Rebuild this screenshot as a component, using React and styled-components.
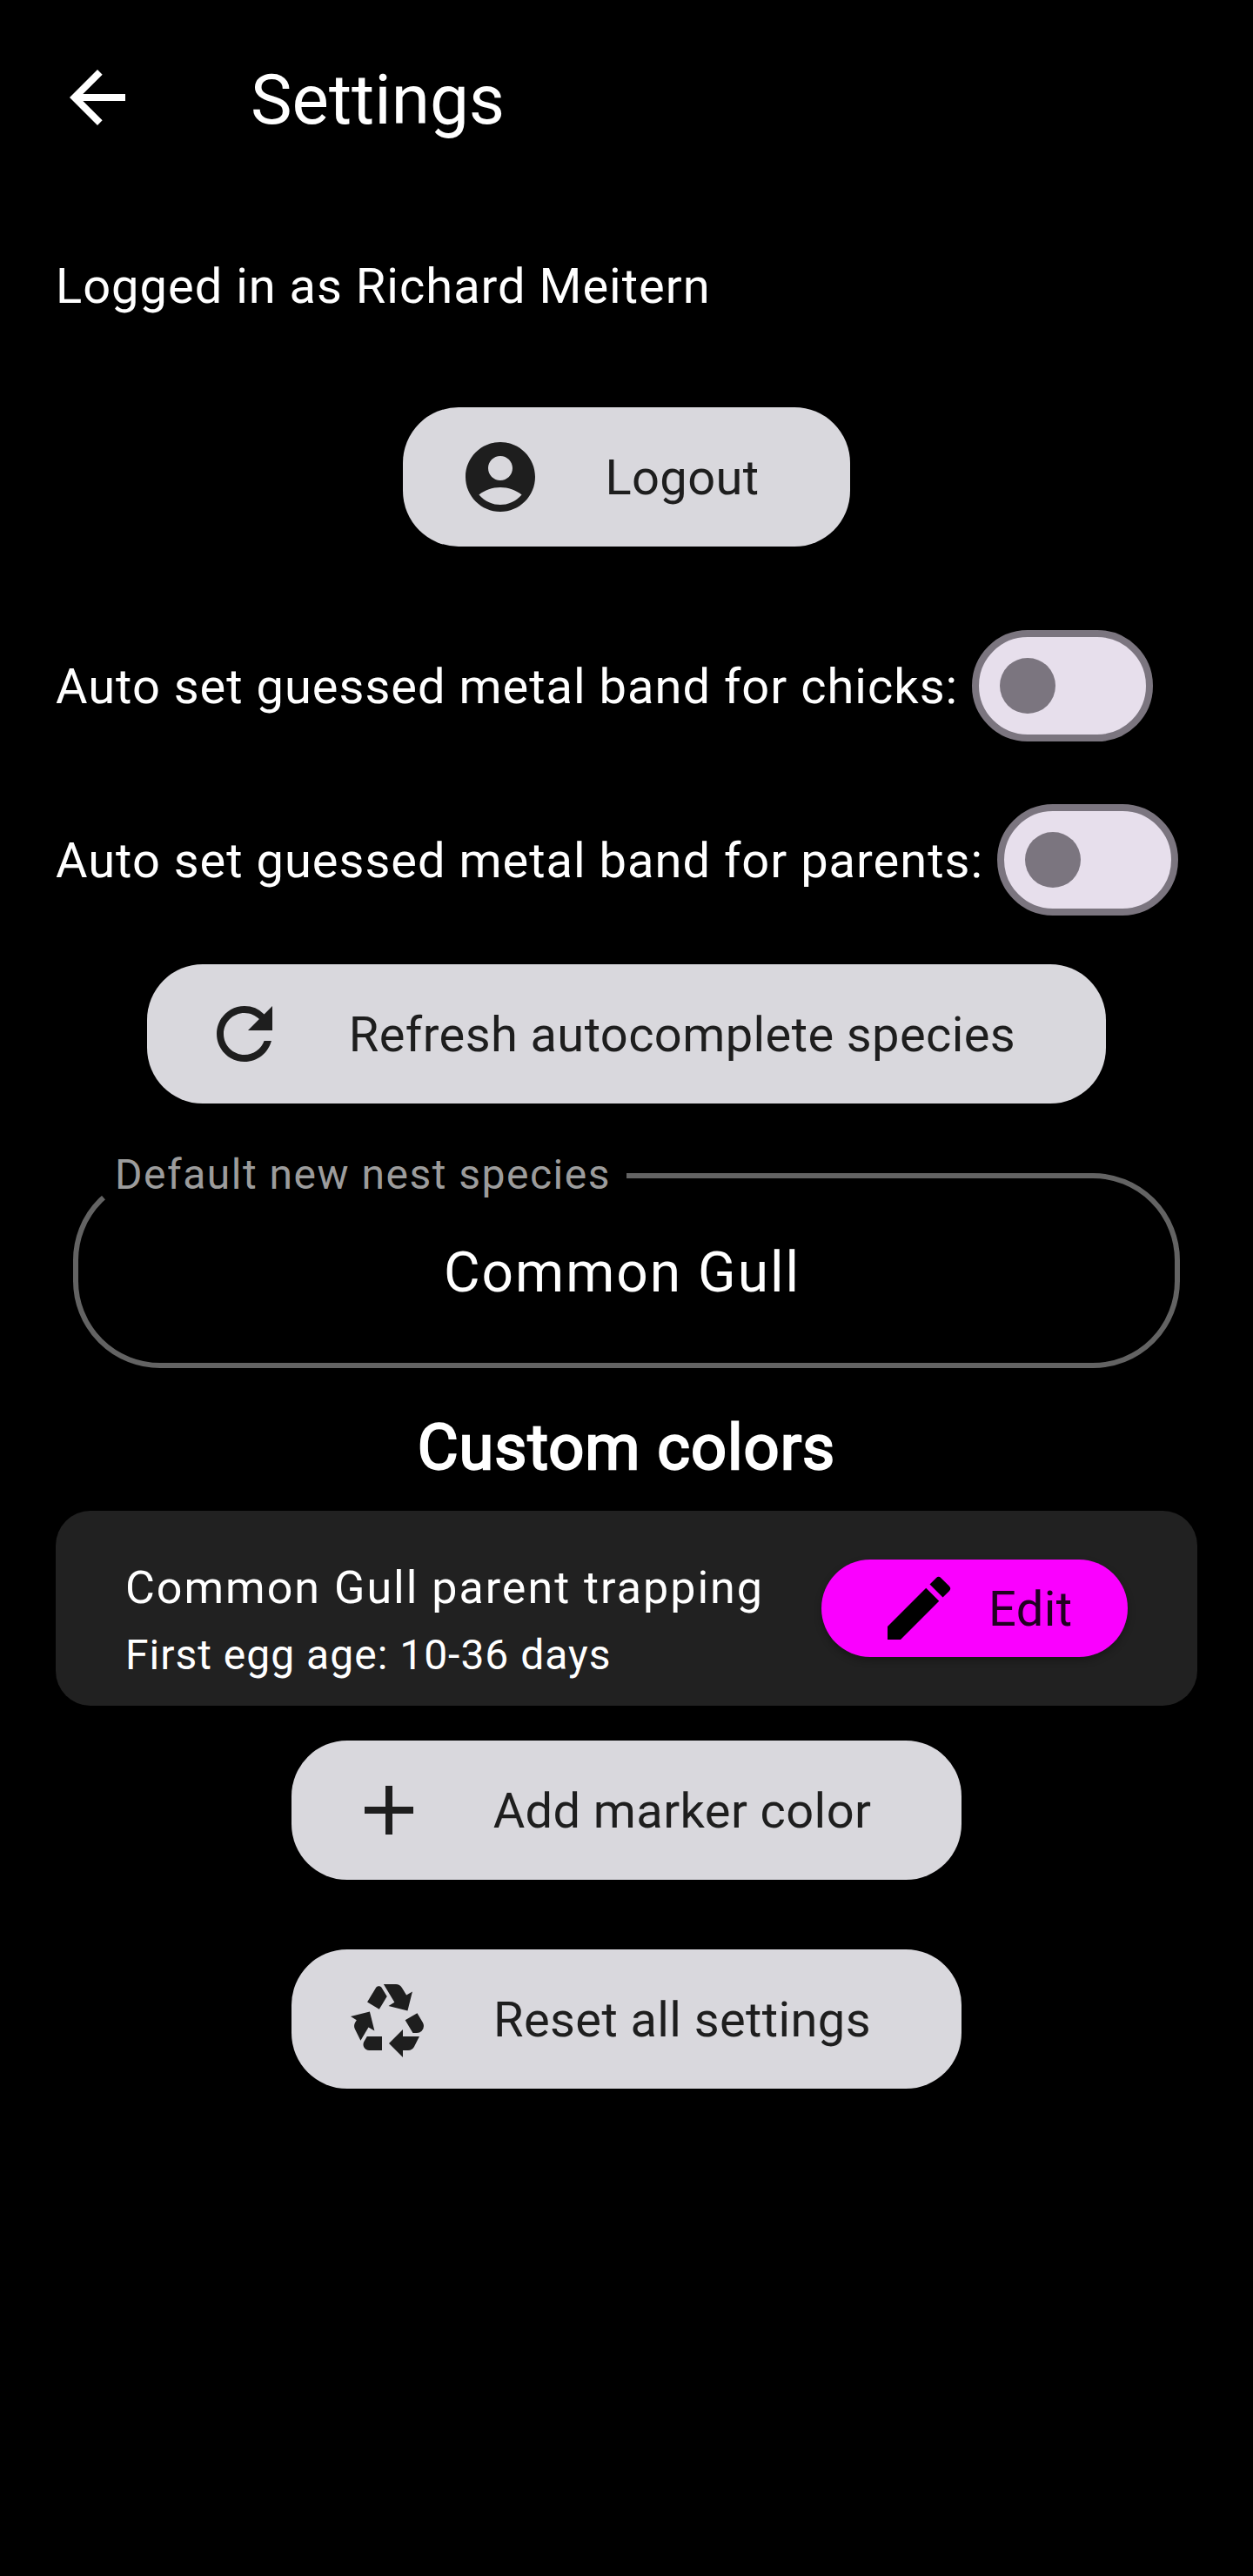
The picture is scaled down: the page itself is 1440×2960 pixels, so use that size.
import React from "react";
import styled, { createGlobalStyle } from "styled-components";
import { MdArrowBack, MdRefresh, MdAdd, MdRecycling, MdEdit } from "react-icons/md";

const GlobalStyle = createGlobalStyle`
  html, body { margin: 0; background: #000; }
  *, *::before, *::after { box-sizing: border-box; }
  button { border: 0; font: inherit; color: inherit; margin: 0; }
`;

const Screen = styled.main`
  width: 1440px;
  min-height: 2960px;
  background: #000;
  color: #fff;
  font-family: Roboto, "Liberation Sans", sans-serif;
  font-size: 56px;
  line-height: 80px;
  white-space: nowrap;
`;

const AppBar = styled.header`
  height: 224px;
  padding: 0 64px;
  display: flex;
  align-items: center;
`;

const BackButton = styled.button`
  display: flex;
  padding: 0;
  background: none;
`;

const Title = styled.h1`
  margin: 6px 0 0 128px;
  font-size: 80px;
  font-weight: 400;
  line-height: 96px;
`;

const Content = styled.div`
  display: flex;
  flex-direction: column;
  padding: 64px 64px 0;
`;

const Label = styled.span`
  padding-top: 2px;
  letter-spacing: ${(p) => p.$spacing ?? 1}px;
`;

const AccountRow = styled.div`
  display: flex;
  align-items: center;
  height: 80px;
`;

const TonalButton = styled.button`
  align-self: center;
  display: flex;
  align-items: center;
  gap: 72px;
  height: 160px;
  margin-top: ${(p) => p.$top}px;
  padding: 0 104px 0 64px;
  border-radius: 64px;
  background: #d9d8dd;
  color: #1e1e1e;
`;

const SwitchRow = styled.div`
  display: flex;
  align-items: center;
  gap: 16px;
  height: 128px;
  margin-top: ${(p) => p.$top}px;
`;

const Track = styled.button`
  display: flex;
  align-items: center;
  width: 208px;
  height: 128px;
  padding: 0 24px;
  border: 8px solid #7b757f;
  border-radius: 64px;
  background: #e7dfec;
`;

const Thumb = styled.span`
  width: 64px;
  height: 64px;
  border-radius: 50%;
  background: #7b757f;
`;

const Field = styled.div`
  position: relative;
  display: flex;
  align-items: center;
  justify-content: center;
  height: 224px;
  margin: 80px 20px 0;
  font-size: 64px;
`;

const FieldOutline = styled.span`
  position: absolute;
  inset: 0;
  border: 6px solid #636363;
  border-radius: 100px;
  clip-path: polygon(0 0, 10.4px 0, 33.1px 26px, 41px 35px, 41px 60px, 636px 60px, 636px 0, 100% 0, 100% 100%, 0 100%);
`;

const FieldLabel = styled.span`
  position: absolute;
  left: 48px;
  top: -27px;
  color: #9c9c9c;
  font-size: 48px;
  line-height: 57px;
  letter-spacing: 1.5px;
`;

const FieldValue = styled.span`
  margin-right: 10px;
  padding-top: 5px;
  line-height: 81px;
  letter-spacing: 2px;
`;

const SectionTitle = styled.h2`
  margin: 44px 0 0;
  height: 120px;
  font-size: 72px;
  font-weight: 400;
  line-height: 96px;
  letter-spacing: 1px;
  text-align: center;
  -webkit-text-stroke: 2.3px #fff;
`;

const Card = styled.section`
  display: flex;
  align-items: center;
  justify-content: space-between;
  height: 224px;
  padding: 0 80px;
  border-radius: 40px;
  background: #212121;
`;

const CardText = styled.div`
  display: flex;
  flex-direction: column;
  padding-top: 28px;
`;

const CardTitle = styled.span`
  font-size: 52px;
  line-height: 79px;
  letter-spacing: 2px;
`;

const CardSubtitle = styled.span`
  font-size: 48px;
  line-height: 75px;
  letter-spacing: 1px;
`;

const EditButton = styled.button`
  display: flex;
  align-items: center;
  gap: 32px;
  width: 352px;
  height: 112px;
  padding: 0 0 0 64px;
  border-radius: 56px;
  background: #fa00ff;
  color: #000;
  box-shadow: 0 4px 8px rgba(0, 0, 0, 0.3);
`;

const EditLabel = styled(Label)`
  color: rgba(0, 0, 0, 0.87);
`;

function AccountCircle() {
  return (
    <svg width="96" height="96" viewBox="0 0 24 24" fill="currentColor">
      <path d="M12 2C6.48 2 2 6.48 2 12s4.48 10 10 10 10-4.48 10-10S17.52 2 12 2zm0 4c1.93 0 3.5 1.57 3.5 3.5S13.93 13 12 13s-3.5-1.57-3.5-3.5S10.07 6 12 6zm0 14c-2.03 0-4.43-.82-6.14-2.88C7.55 15.8 9.68 15 12 15s4.45.8 6.14 2.12C16.43 19.18 14.03 20 12 20z" />
    </svg>
  );
}

function ActionButton({ icon, top, children }) {
  return (
    <TonalButton $top={top}>
      {icon}
      <Label $spacing={0.4}>{children}</Label>
    </TonalButton>
  );
}

function Toggle({ label, top }) {
  return (
    <SwitchRow $top={top}>
      <Label>{label}</Label>
      <Track role="switch" aria-checked="false" aria-label={label}>
        <Thumb />
      </Track>
    </SwitchRow>
  );
}

export default function App() {
  return (
    <>
      <GlobalStyle />
      <Screen>
        <AppBar>
          <BackButton aria-label="Back">
            <MdArrowBack size={96} />
          </BackButton>
          <Title>Settings</Title>
        </AppBar>
        <Content>
          <AccountRow>
            <Label>Logged in as Richard Meitern</Label>
          </AccountRow>
          <ActionButton top={100} icon={<AccountCircle />}>Logout</ActionButton>
          <Toggle top={96} label="Auto set guessed metal band for chicks:" />
          <Toggle top={72} label="Auto set guessed metal band for parents:" />
          <ActionButton top={56} icon={<MdRefresh size={96} />}>Refresh autocomplete species</ActionButton>
          <Field>
            <FieldOutline />
            <FieldLabel>Default new nest species</FieldLabel>
            <FieldValue>Common Gull</FieldValue>
          </Field>
          <SectionTitle>Custom colors</SectionTitle>
          <Card>
            <CardText>
              <CardTitle>Common Gull parent trapping</CardTitle>
              <CardSubtitle>First egg age: 10-36 days</CardSubtitle>
            </CardText>
            <EditButton>
              <MdEdit size={96} />
              <EditLabel $spacing={0.4}>Edit</EditLabel>
            </EditButton>
          </Card>
          <ActionButton top={40} icon={<MdAdd size={96} />}>Add marker color</ActionButton>
          <ActionButton top={80} icon={<MdRecycling size={96} />}>Reset all settings</ActionButton>
        </Content>
      </Screen>
    </>
  );
}
